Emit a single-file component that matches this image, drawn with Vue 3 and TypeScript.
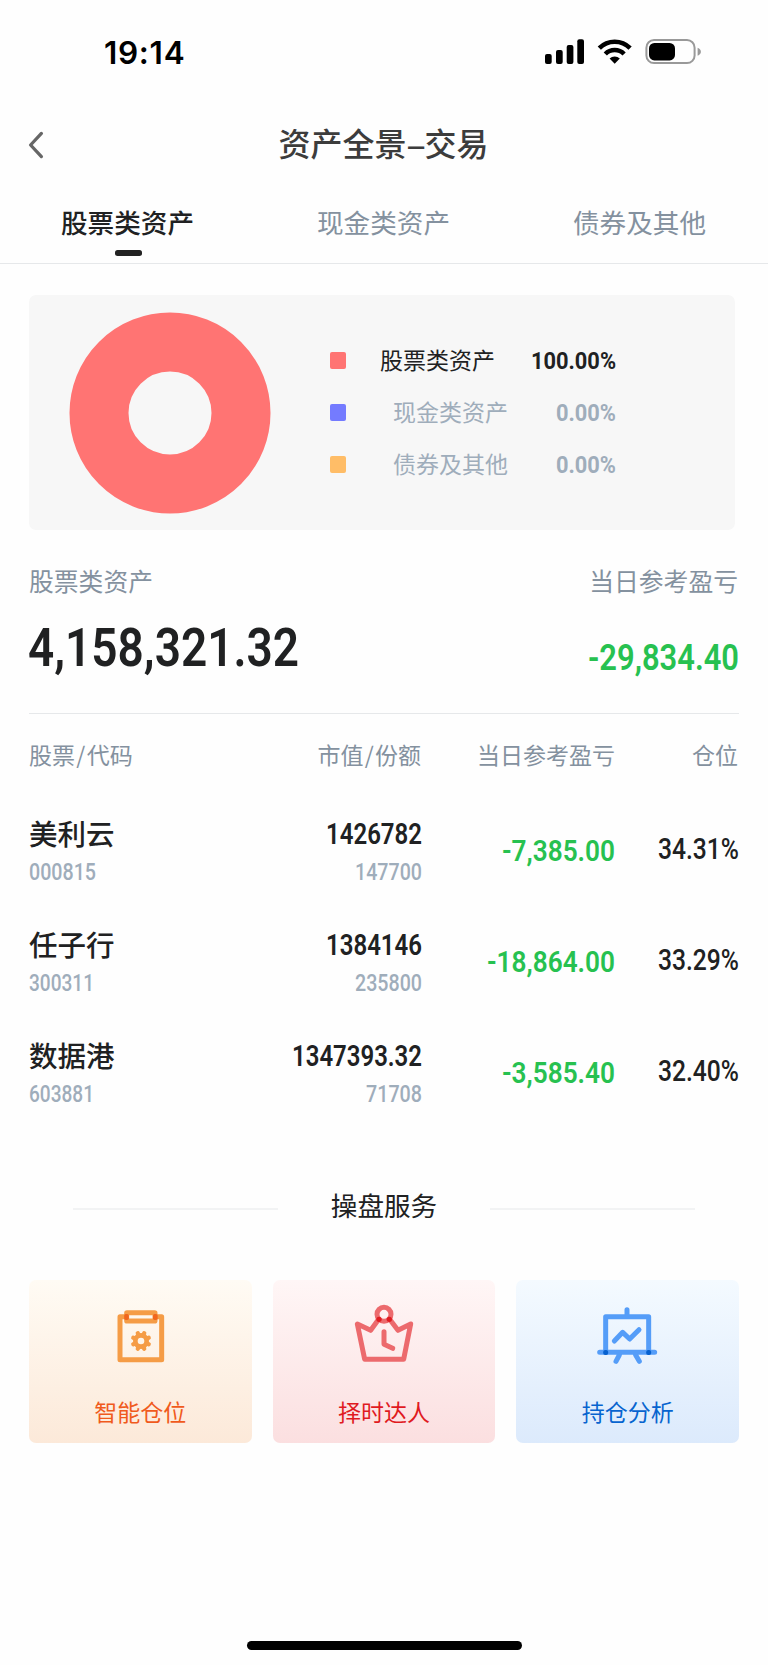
<script setup lang="ts">
import { h, type FunctionalComponent } from 'vue'

interface FigureProps {
  text: string
  cap: number
  w: number
  weight?: number
  dx?: number
}

// Condensed figures: `cap` is the digit height and `w` the advance width.
const Figure: FunctionalComponent<FigureProps> = (p) =>
  h('svg', { width: p.w, height: p.cap, overflow: 'visible' }, [
    h(
      'text',
      {
        x: p.dx ?? 0,
        y: p.cap,
        fill: 'currentColor',
        'font-family': 'Roboto, "Liberation Sans", sans-serif',
        'font-size': p.cap / 0.711,
        'font-weight': p.weight ?? 500,
        textLength: p.w,
        lengthAdjust: 'spacingAndGlyphs',
      },
      p.text,
    ),
  ])
Figure.props = ['text', 'cap', 'w', 'weight', 'dx']

const tabs: string[] = ['股票类资产', '现金类资产', '债券及其他']

const legend = [
  { label: '股票类资产', value: '100.00%', w: 85, tone: 'red' },
  { label: '现金类资产', value: '0.00%', w: 60, tone: 'blue' },
  { label: '债券及其他', value: '0.00%', w: 60, tone: 'amber' },
]

const holdings = [
  { name: '美利云', code: '000815', codeW: 67, value: '1426782', valueW: 96, shares: '147700', sharesW: 67, profit: '-7,385.00', profitW: 113, ratio: '34.31%' },
  { name: '任子行', code: '300311', codeW: 65, value: '1384146', valueW: 96, shares: '235800', sharesW: 67, profit: '-18,864.00', profitW: 128, ratio: '33.29%' },
  { name: '数据港', code: '603881', codeW: 65, value: '1347393.32', valueW: 130, shares: '71708', sharesW: 56, profit: '-3,585.40', profitW: 113, ratio: '32.40%' },
]

const teeth: number[] = [0, 45, 90, 135, 180, 225, 270, 315]
</script>

<template>
  <div class="screen">
    <header class="status">
      <span class="clock">19:14</span>
      <svg class="indicators" width="158" height="28" viewBox="0 0 158 28">
        <rect x="1" y="16" width="6.7" height="10" rx="2" />
        <rect x="12" y="12" width="6.7" height="14" rx="2" />
        <rect x="22.7" y="7" width="6.7" height="19" rx="2" />
        <rect x="33.3" y="1.3" width="6.7" height="24.7" rx="2" />
        <g fill="none" stroke="#000" stroke-width="4.6">
          <path d="M55.3 10.1A21.8 21.8 0 0 1 86.1 10.1" />
          <path d="M61.3 16A13.2 13.2 0 0 1 80.1 16" />
        </g>
        <path d="M65.6 20.6a7.4 7.4 0 0 1 10.2 0L70.7 25.8z" />
        <rect x="102.4" y="2.1" width="48.2" height="23" rx="7.6" fill="none" stroke="#999" stroke-width="2" />
        <rect x="105" y="5" width="26" height="17.4" rx="5.4" />
        <path d="M153.6 9.7c4.4 1.5 4.4 6.5 0 8z" fill="#999" />
      </svg>
    </header>

    <nav class="nav">
      <svg class="back" width="16" height="28" viewBox="0 0 16 28">
        <path d="M13.4 2.4L2.6 14l10.8 11.6" />
      </svg>
      <h1>资产全景<i class="dash">–</i>交易</h1>
    </nav>

    <div class="tabs">
      <div v-for="(t, i) in tabs" :key="t" class="tab" :class="{ active: i === 0 }">
        <span>{{ t }}</span>
      </div>
    </div>

    <section class="chart">
      <svg class="donut" width="202" height="202" viewBox="0 0 202 202">
        <circle cx="101" cy="101" r="71" />
      </svg>
      <ul class="legend">
        <li v-for="(l, i) in legend" :key="l.label" :class="{ current: i === 0 }">
          <i class="swatch" :class="l.tone"></i>
          <span>{{ l.label }}</span>
          <Figure class="num" :text="l.value" :cap="16.8" :w="l.w" :weight="700" />
        </li>
      </ul>
    </section>

    <section class="summary">
      <div class="total">
        <p>股票类资产</p>
        <Figure text="4,158,321.32" :cap="38.3" :w="271" :dx="-1" :weight="600" />
      </div>
      <div class="today">
        <p>当日参考盈亏</p>
        <Figure class="green" text="-29,834.40" :cap="25.6" :w="151" :weight="600" />
      </div>
    </section>

    <section class="table">
      <div class="row head">
        <span>股票<i>/</i>代码</span><span>市值<i>/</i>份额</span><span>当日参考盈亏</span><span>仓位</span>
      </div>
      <div v-for="r in holdings" :key="r.code" class="row item">
        <div class="pair">
          <b>{{ r.name }}</b>
          <Figure class="sub" :text="r.code" :cap="16.7" :w="r.codeW" />
        </div>
        <div class="pair">
          <Figure class="main" :text="r.value" :cap="20.4" :w="r.valueW" :weight="600" />
          <Figure class="sub" :text="r.shares" :cap="16.7" :w="r.sharesW" />
        </div>
        <Figure class="green profit" :text="r.profit" :cap="21" :w="r.profitW" :weight="600" />
        <Figure class="ratio" :text="r.ratio" :cap="21.5" :w="81" />
      </div>
    </section>

    <div class="services-title"><i></i><h2>操盘服务</h2><i></i></div>

    <section class="services">
      <div class="service orange">
        <svg width="90" height="90" viewBox="-16 0 270 270">
          <g fill="none" stroke="#f59c46" stroke-width="15" stroke-linejoin="round">
            <path d="M79 80H59V209H184V80H165" />
            <rect x="79" y="68" width="85" height="25" rx="1" />
            <circle cx="122" cy="153" r="17" stroke-width="14" />
            <g stroke-width="13" stroke-linecap="round">
              <path v-for="a in teeth" :key="a" d="M122 134v-6" :transform="`rotate(${a + 22.5} 122 153)`" />
            </g>
          </g>
          <rect x="71.500" y="72" width="14" height="18" rx="5" fill="#f1661d" />
          <rect x="158" y="72" width="14" height="18" rx="5" fill="#f1661d" />
        </svg>
        <span>智能仓位</span>
      </div>
      <div class="service rose">
        <svg width="90" height="90" viewBox="-4 0 270 270">
          <g fill="none" stroke="#ec6a6d" stroke-width="15" stroke-linejoin="round" stroke-linecap="round">
            <circle cx="131" cy="73" r="21" />
            <path d="M115 88L91 121L51 102L73 208H190L211 102L173 121L148 88M131 125V163L157 175" />
          </g>
          <circle cx="116" cy="88" r="8" fill="#e01d22" />
          <circle cx="147" cy="88" r="8" fill="#e01d22" />
        </svg>
        <span>择时达人</span>
      </div>
      <div class="service azure">
        <svg width="90" height="90" viewBox="8 0 270 270">
          <g fill="none" stroke="#559df8" stroke-width="15" stroke-linejoin="round" stroke-linecap="round">
            <path d="M76 187V80H205V187M58 187H223M140 80V59M117 195L107 214M166 195L177 214" />
            <path d="M102 153L127 127L148 147L176 119" />
          </g>
          <rect x="68.500" y="180" width="15" height="15" rx="6" fill="#0761cf" />
          <rect x="197.500" y="180" width="15" height="15" rx="6" fill="#0761cf" />
        </svg>
        <span>持仓分析</span>
      </div>
    </section>

    <div class="home"></div>
  </div>
</template>

<style>
body {
  background: #fff;
}
</style>

<style scoped>
.screen {
  width: 768px;
  height: 1665px;
  box-sizing: border-box;
  display: flex;
  flex-direction: column;
  overflow: hidden;
  background: #fefefe;
  color: #202122;
  font-family: 'Noto Sans CJK SC', 'Noto Sans', sans-serif;
}
.screen svg {
  display: block;
  flex: none;
}
h1, h2, p, ul {
  margin: 0;
  padding: 0;
  font-weight: 400;
}
.status {
  height: 103px;
  display: flex;
  justify-content: space-between;
  align-items: center;
  padding: 0 66px 0 104px;
  flex: none;
}
.clock {
  font: 600 31.5px/40px Inter, 'Liberation Sans', sans-serif;
  letter-spacing: 0.7px;
  color: #000;
  padding-top: 2px;
}
.nav {
  height: 80px;
  flex: none;
  display: flex;
  align-items: center;
  padding: 0 28px;
}
.back {
  margin-top: 4px;
}
.back path {
  fill: none;
  stroke: #666;
  stroke-width: 3.3;
  stroke-linecap: round;
  stroke-linejoin: round;
}
.nav h1 {
  flex: 1;
  margin: 3px 17px 0 0;
  text-align: center;
  font-size: 32px;
  line-height: 40px;
  font-weight: 500;
  color: #3c3c3c;
}
.dash {
  display: inline-block;
  font-style: normal;
  font-family: Inter, sans-serif;
  font-size: 27px;
  width: 18px;
  transform: scaleX(1.2);
}
.tabs {
  height: 80px;
  flex: none;
  display: grid;
  grid-template-columns: repeat(3, 1fr);
  border-bottom: 1px solid #e6e8ea;
  font-size: 26.6px;
  line-height: 36px;
  color: #84919f;
}
.tab {
  display: flex;
  flex-direction: column;
  align-items: center;
  padding-top: 21px;
}
.tab span {
  margin-left: -1px;
}
.tab.active {
  color: #202122;
  font-weight: 500;
}
.tab.active::after {
  content: '';
  width: 27px;
  height: 6px;
  margin-top: 10px;
  border-radius: 2.5px;
  background: #222;
}
.chart {
  margin: 31px 33px 0 29px;
  height: 235px;
  flex: none;
  display: flex;
  align-items: center;
  background: #f7f7f7;
  border-radius: 7px;
}
.donut {
  margin-left: 40px;
}
.donut circle {
  fill: none;
  stroke: #ff7473;
  stroke-width: 59;
}
.legend {
  list-style: none;
  margin-left: 59px;
  width: 286px;
}
.legend li {
  height: 52px;
  display: flex;
  align-items: center;
  font-size: 23px;
  line-height: 30px;
  color: #9fadbb;
}
.legend li span {
  margin: -3px 0 0 47px;
}
.legend .current {
  color: #202122;
}
.legend .current span {
  margin-left: 34px;
}
.legend .num {
  margin-left: auto;
}
.swatch {
  width: 16px;
  height: 17px;
  border-radius: 2px;
}
.red { background: #ff7473; }
.blue { background: #747bff; }
.amber { background: #ffbd67; }
.summary {
  margin: 0 29px;
  height: 184px;
  flex: none;
  box-sizing: border-box;
  border-bottom: 1px solid #e6e8ea;
  display: flex;
  justify-content: space-between;
}
.summary p {
  margin-top: 32px;
  font-size: 24.8px;
  line-height: 36px;
  color: #84919f;
}
.total svg {
  margin-top: 30px;
}
.today {
  display: flex;
  flex-direction: column;
  align-items: flex-end;
}
.today p {
  margin-right: 1px;
}
.today svg {
  margin-top: 46px;
}
.screen .green {
  color: #27c150;
}
.table {
  margin: 0 29px;
  flex: none;
}
.row {
  display: grid;
  grid-template-columns: 213px 180px 193px 124px;
}
.row > :not(:first-child) {
  justify-self: end;
}
.head {
  height: 86px;
  box-sizing: border-box;
  padding-top: 24px;
  font-size: 23px;
  line-height: 32px;
  color: #84919f;
}
.head i {
  font-style: normal;
  padding: 0 1.3px;
}
.head span:not(:first-child):not(:nth-child(3)) {
  margin-right: 1px;
}
.item {
  height: 111px;
}
.pair {
  height: 80px;
  display: flex;
  flex-direction: column;
}
.pair:not(:first-child) {
  align-items: flex-end;
}
.pair b {
  font-size: 28.5px;
  line-height: 36px;
  height: 36px;
  margin-top: 15px;
  font-weight: 500;
}
.pair .main {
  margin-top: 24.200px;
}
.pair .sub {
  color: #9fadbb;
  margin-top: 12px;
}
.pair .main + .sub {
  margin-top: 18.500px;
}
.profit {
  margin-top: 39.500px;
}
.ratio {
  margin-top: 36.500px;
}
.services-title {
  margin: 50px 73px 0;
  height: 44px;
  flex: none;
  display: flex;
  align-items: center;
  justify-content: space-between;
}
.services-title i {
  width: 205px;
  height: 2px;
  margin-top: 8px;
  background: #f2f3f4;
}
.services-title h2 {
  font-size: 26.6px;
  line-height: 36px;
}
.services {
  margin: 53px 29px 0;
  height: 163px;
  flex: none;
  display: grid;
  grid-template-columns: repeat(3, 1fr);
  gap: 21px;
}
.service {
  border-radius: 7px;
  display: flex;
  flex-direction: column;
  align-items: center;
  padding-top: 10px;
  font-size: 23px;
  line-height: 32px;
}
.service span {
  margin-top: 15px;
}
.orange {
  background: linear-gradient(#fffbf4, #fce9d9);
  color: #f05a1c;
}
.rose {
  background: linear-gradient(#fff6f6, #fbdfe0);
  color: #e01a1f;
}
.azure {
  background: linear-gradient(#f4faff, #dceafc);
  color: #0764cf;
}
.home {
  width: 275px;
  height: 9px;
  margin: auto auto 15px;
  flex: none;
  border-radius: 5px;
  background: #000;
}
</style>
